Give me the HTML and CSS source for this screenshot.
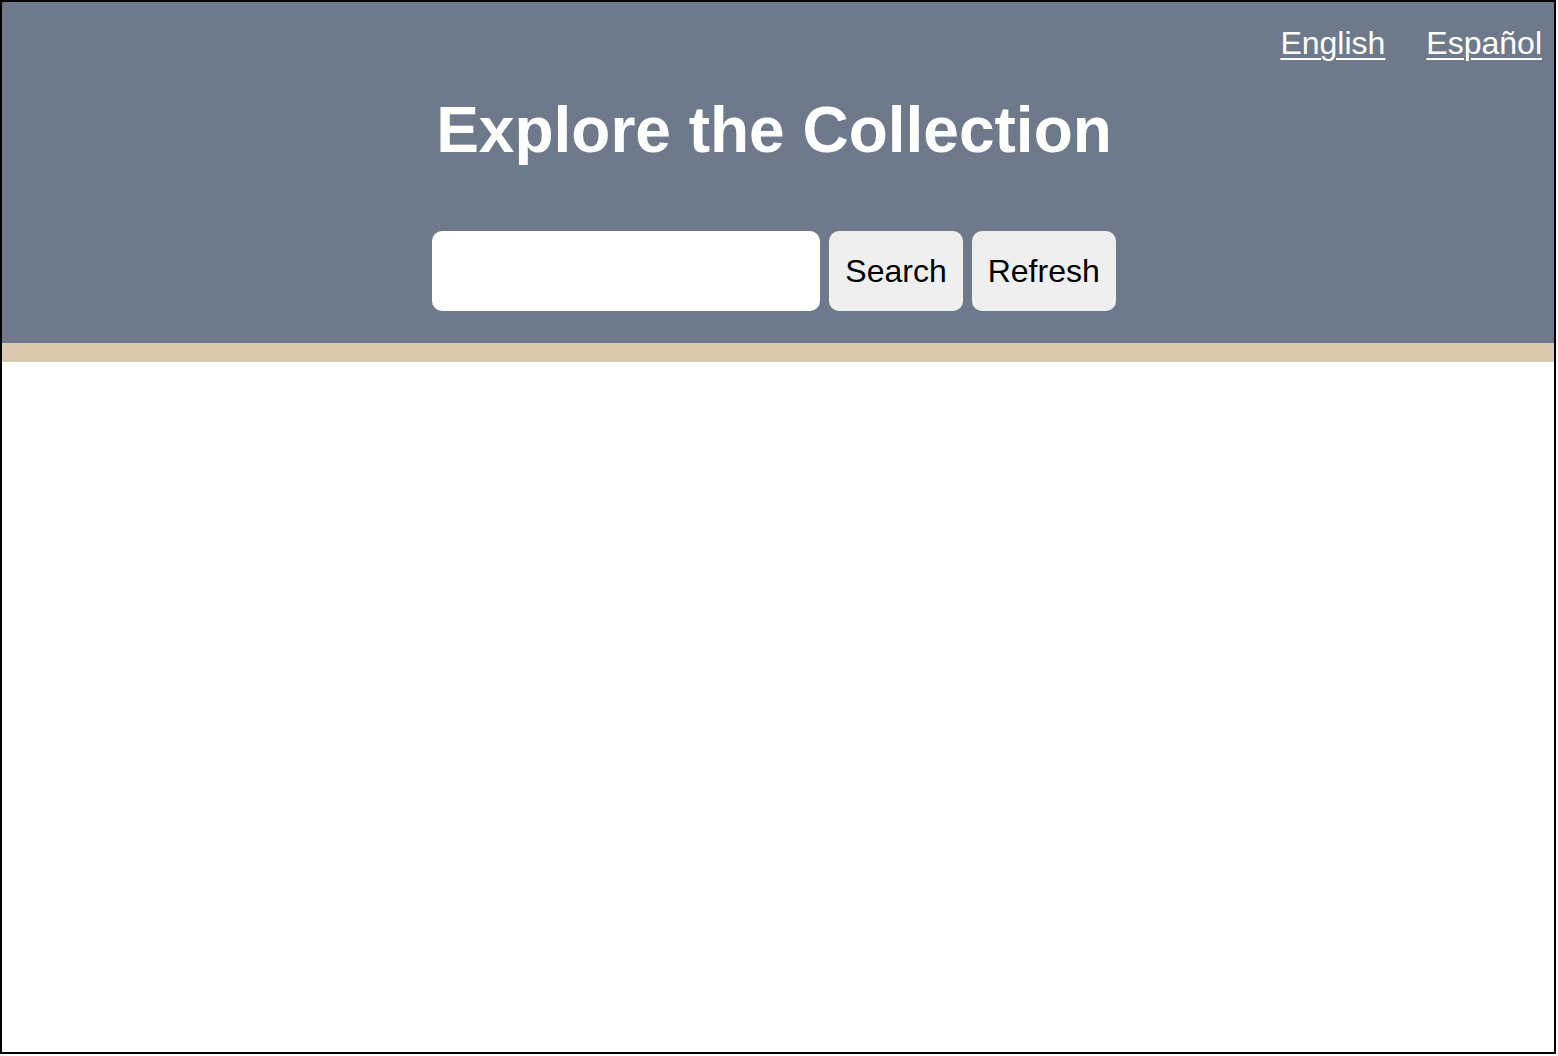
FILE: index.html
```html
<!DOCTYPE html>
<html lang="en">
<head>
<meta charset="utf-8">
<title>Explore the Collection</title>
<link rel="stylesheet" href="styles.css">
</head>
<body>
<div class="frame">
  <header class="masthead">
    <nav class="lang">
      <a href="#" class="lang-link">English</a>
      <a href="#" class="lang-link">Español</a>
    </nav>
    <h1 class="title">Explore the Collection</h1>
    <form class="search" onsubmit="return false">
      <input type="text" class="search-input" aria-label="Search">
      <button type="submit" class="btn">Search</button>
      <button type="button" class="btn">Refresh</button>
    </form>
  </header>
  <div class="accent"></div>
  <main class="content"></main>
</div>
</body>
</html>
```

FILE: styles.css
```css
html, body {
  margin: 0;
  padding: 0;
  background: #ffffff;
}

body {
  font-family: "Liberation Sans", Arial, Helvetica, sans-serif;
}

.frame {
  width: 1556px;
  height: 1054px;
  box-sizing: border-box;
  border: 2px solid #000000;
  background: #ffffff;
  overflow: hidden;
}

.masthead {
  background: #6e7a8b;
  padding: 23px 12px 32px 4px;
}

.lang {
  display: flex;
  justify-content: flex-end;
  gap: 41px;
  font-size: 32px;
  line-height: 37px;
}

.lang-link {
  color: #ffffff;
  text-decoration: underline;
  text-decoration-thickness: 2px;
  text-underline-offset: 4px;
}

.title {
  margin: 31px 0 0;
  font-size: 64px;
  line-height: 74px;
  font-weight: 700;
  color: #ffffff;
  text-align: center;
}

.search {
  margin: 64px 0 0;
  display: flex;
  justify-content: center;
  gap: 9px;
  height: 80px;
}

.search-input {
  width: 388px;
  height: 80px;
  box-sizing: border-box;
  border: none;
  border-radius: 10px;
  background: #ffffff;
  padding: 0 16px;
  font-family: inherit;
  font-size: 32px;
  outline: none;
}

.btn {
  height: 80px;
  box-sizing: border-box;
  border: none;
  border-radius: 10px;
  background: #efefef;
  color: #000000;
  padding: 0 16px;
  font-family: inherit;
  font-size: 32px;
  line-height: 37px;
  cursor: pointer;
}

.accent {
  height: 19px;
  background: #dac9ad;
}

.content {
  background: #ffffff;
}
```
